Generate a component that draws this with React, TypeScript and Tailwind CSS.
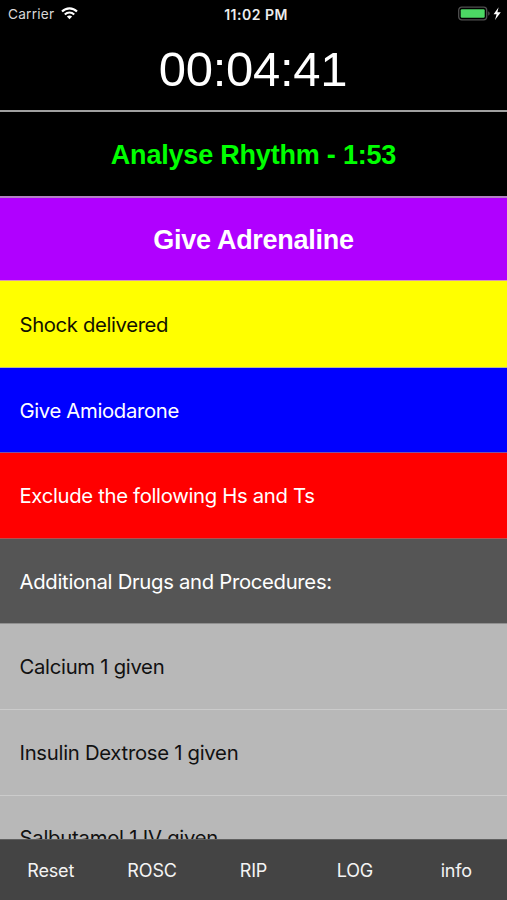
const rows = [
  { label: "Shock delivered", style: "h-[87px] bg-[#ffff00] text-[#111100] border-[#b9b98e]", text: "tracking-[-0.36px]" },
  { label: "Give Amiodarone", style: "h-[85px] bg-[#0000ff] text-white border-[#8050a0]", text: "tracking-[-0.34px]" },
  { label: "Exclude the following Hs and Ts", style: "h-[86px] bg-[#ff0000] text-white border-[#b45050]", text: "tracking-[-0.32px]" },
  { label: "Additional Drugs and Procedures:", style: "h-[85px] bg-[#555555] text-white border-[#909090]", text: "tracking-[-0.3px]" },
  { label: "Calcium 1 given", style: "h-[86px] bg-[#b8b8b8] text-[#111111] border-[#cbcbcb]", text: "tracking-[-0.29px]" },
  { label: "Insulin Dextrose 1 given", style: "h-[86px] bg-[#b8b8b8] text-[#111111] border-[#cbcbcb]", text: "tracking-[-0.28px]" },
  { label: "Salbutamol 1 IV given", style: "h-[84px] bg-[#b8b8b8] text-[#111111] border-[#cbcbcb]", text: "tracking-[-0.24px]" },
];

const actions = ["Reset", "ROSC", "RIP", "LOG", "info"];

function StatusBar() {
  return (
    <div className="grid h-7 shrink-0 grid-cols-3 items-center pl-2 text-[13px] leading-none">
      <div className="flex items-center gap-[7px]">
        <span className="pt-0.5 text-[13.7px] tracking-[0.2px] text-[#d8d8d8]">Carrier</span>
        <svg width="17" height="13" viewBox="0 0 17 13" fill="none" stroke="white" strokeWidth="2.1">
          <path d="M1 4.6C5.2.3 11.8.3 16 4.6" />
          <path d="M3.8 7.5c2.7-2.7 6.7-2.7 9.4 0" />
          <path d="M5.9 9.6c1.5-1.5 3.7-1.5 5.2 0L8.5 12.3z" fill="white" stroke="none" />
        </svg>
      </div>
      <span className="whitespace-nowrap pr-[3px] pt-0.5 text-center text-[14px] font-semibold tracking-[0.5px] text-[#ededed]">11:02 PM</span>
      <div className="flex items-center justify-end">
        <svg width="50" height="16" viewBox="0 0 50 16">
          <rect x="1.7" y="1.2" width="28" height="12.6" rx="3" fill="none" stroke="#505050" strokeWidth="1.3" />
          <rect x="3.7" y="3.2" width="24" height="8.6" rx="1.2" fill="#4cd964" />
          <path d="M31.2 5.3c2 .8 2 3.6 0 4.4z" fill="#505050" />
          <path d="M41.6 1.3 36.6 8.3h3l-1.6 5.6 5.8-7.6h-3.4z" fill="white" />
        </svg>
      </div>
    </div>
  );
}

export default function App() {
  return (
    <div className="flex h-[900px] w-[507px] flex-col overflow-hidden bg-black font-['Inter','Liberation_Sans',sans-serif] text-white">
      <StatusBar />
      <div className="flex h-[84px] shrink-0 items-center justify-center border-b-2 border-[#a0a0a0] pr-px font-['Liberation_Sans',Arial,sans-serif] text-[49px] leading-none tracking-[-0.3px]">
        00:04:41
      </div>
      <div className="flex h-[86px] shrink-0 items-center justify-center border-b-2 border-[#b480c4] pt-0.5 font-['Liberation_Sans',Arial,sans-serif] text-[27px] font-bold leading-none tracking-[-0.2px] text-[#00ff00]">
        <span>Analyse Rhythm - 1:53</span>
      </div>
      <div className="flex h-[83px] shrink-0 items-center justify-center border-b border-[#d99ab0] bg-[#b000ff] pt-[3px] font-['Liberation_Sans',Arial,sans-serif] text-[27px] font-bold leading-none tracking-[-0.27px]">
        <span>Give Adrenaline</span>
      </div>
      <main className="min-h-0 flex-1 overflow-hidden">
        {rows.map((row) => (
          <div key={row.label} className={`flex items-center border-b pl-[19.5px] pt-0.5 text-[20.3px] leading-none ${row.style}`}>
            <span className={`whitespace-nowrap ${row.text}`}>{row.label}</span>
          </div>
        ))}
      </main>
      <footer className="grid h-[61px] shrink-0 grid-cols-5 items-center border-t border-[#606060] bg-[#444444] pt-px text-center text-[18px] leading-none tracking-[-0.15px] text-[#f4f4f4]">
        {actions.map((a) => (
          <span key={a}>{a}</span>
        ))}
      </footer>
    </div>
  );
}
